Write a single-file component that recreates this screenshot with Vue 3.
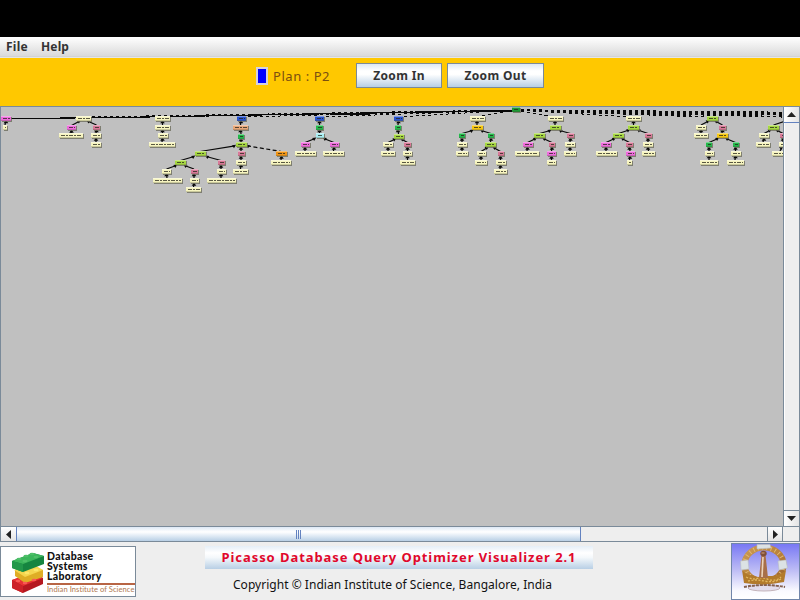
<script setup>
const colors = {
  c: '#f6f4bf', p: '#ee6bdc', r: '#d87998', g: '#23b84b', y: '#a5d642',
  b: '#2853ce', s: '#e9a779', o: '#f09416', t: '#a8edf2', w: '#f5c713'
}

// Each node: x, y, width, colour key, index of its parent within the tree
const trees = [
  [[6, 118, 10, 'p'], [5, 127, 4, 'c', 0]],
  [[83.5, 118, 15, 'c'], [71.5, 127.5, 9, 'p', 0], [71, 135.5, 24, 'c', 1], [96.5, 127, 7, 'r', 0], [96, 135.5, 10, 'c', 3], [96, 144.5, 10, 'c', 4]],
  [[162.5, 118, 15, 'c'], [162.5, 127, 15, 'c', 0], [162.5, 135.5, 10, 'c', 1], [162, 144.5, 26, 'c', 2]],
  [[241, 118, 9, 'b'], [240.5, 127, 15, 's', 0], [241, 136, 6, 'g', 1], [241, 144.5, 11, 'y', 2],
    [241, 153.5, 7, 'r', 3], [241, 162, 10, 'c', 4], [240.5, 171, 15, 'c', 5],
    [200, 153.5, 11, 'y', 3], [180.5, 162.5, 11, 'y', 7], [166.5, 171, 9, 'c', 8], [167, 180.5, 29, 'c', 9],
    [194, 171, 7, 'r', 8], [194, 180.5, 9, 'c', 11], [193.5, 189.5, 15, 'c', 12],
    [221, 162.5, 7, 'r', 7], [221, 171, 9, 'c', 14], [221, 180.5, 29, 'c', 15],
    [281.5, 153.5, 11, 'o', 3, true], [281, 162, 20, 'c', 17]],
  [[319.5, 118, 9, 'b'], [319.5, 127, 7, 'g', 0], [319.5, 135.5, 8, 't', 1], [305, 144.5, 9, 'p', 2], [305, 153, 21, 'c', 3], [334, 144.5, 9, 'p', 2], [333.5, 153, 21, 'c', 5]],
  [[398.5, 118, 9, 'b'], [398, 127, 6, 'g', 0], [398.5, 136, 10, 'y', 1], [388, 144.5, 10, 'c', 2], [388, 153, 14, 'c', 3], [407.5, 144.5, 7, 'r', 2], [407.5, 153, 9, 'c', 5], [407.5, 162, 15, 'c', 6]],
  [[477, 118, 15, 'c'], [477, 127.5, 11, 'w', 0], [462, 135.5, 6, 'g', 1], [462, 144.5, 10, 'c', 2], [462, 153, 12, 'c', 3],
    [491, 135.5, 6, 'g', 1], [490.5, 144.5, 11, 'y', 5], [481, 153.5, 9, 'c', 6], [481, 162, 12, 'c', 7],
    [500.5, 153.5, 6, 'r', 6], [500.5, 162.5, 10, 'c', 9], [500, 171, 13, 'c', 10]],
  [[555, 118, 15, 'c'], [555, 127.5, 11, 'y', 0], [539.5, 135.5, 11, 'y', 1], [527.5, 144.5, 10, 'p', 2], [527, 153, 24, 'c', 3],
    [552, 144.5, 6, 'r', 2], [551.5, 153.5, 9, 'p', 5], [551.5, 162, 9, 'c', 6], [570.5, 135.5, 7, 'r', 1], [570, 144.5, 10, 'c', 8], [570, 153, 12, 'c', 9]],
  [[633.5, 118, 15, 'c'], [633.5, 127, 11, 'y', 0], [618.5, 135.5, 11, 'y', 1], [606, 144.5, 10, 'p', 2], [606, 153, 21, 'c', 3],
    [629.5, 144.5, 7, 'r', 2], [630, 153.5, 9, 'p', 5], [629.5, 162, 5, 'c', 6], [648, 135.5, 7, 'r', 1], [648, 144.5, 10, 'c', 8], [648.5, 153, 13, 'c', 9]],
  [[712, 118, 11, 'y'], [701, 127, 10, 'c', 0], [701, 135.5, 14, 'c', 1], [722.5, 127, 7, 'r', 0], [722, 135.5, 11, 'w', 3],
    [709, 144.5, 6, 'g', 4], [709, 153, 9, 'c', 5], [709, 162, 18, 'c', 6], [735.5, 144.5, 6, 'g', 4], [735.5, 153, 10, 'c', 8], [735, 162, 17, 'c', 9]],
  [[791, 118, 11, 'y'], [773.5, 127, 11, 'y', 0], [764, 135.5, 10, 'c', 1], [763, 144.5, 14, 'c', 2], [783, 135.5, 7, 'r', 1], [783, 144.5, 9, 'c', 4], [780, 153, 17, 'c', 5]]
]

const nodes = []
const edges = []
const addNode = (x, y, w, fill) => nodes.push({ x: Math.round(x - w / 2), y: Math.round(y - 2.5), w: w, fill })
for (const tree of trees) {
  for (const [x, y, w, k, parent, dashed] of tree) {
    addNode(x, y, w, colors[k])
    if (parent === undefined) continue
    const [px, py] = tree[parent]
    const dx = x - px
    const dy = y - py
    const wide = Math.abs(dx) > 30
    const ax = wide ? px + Math.sign(dx) * 6 : px + dx * 0.3
    const ay = wide ? py + dy * 6 / Math.abs(dx) : py + 3
    edges.push({
      x1: ax, y1: ay, x2: x, y2: y - 2, dashed,
      head: Math.abs(dx) < 3
        ? `M${px} ${ay - 1} l2.3 3.2 h-4.6z`
        : dx < 0 ? `M${ax + 1} ${ay - 1} l-4 .4 l2 3z` : `M${ax - 1} ${ay - 1} l4 .4 l-2 3z`
    })
  }
}
addNode(515.5, 109.5, 8, '#1d9a35')
const links = [83, 162, 241, 319, 398, 477, 555, 633, 712, 791, 900, 1040, 1300]
</script>

<template>
  <div class="window">
    <div class="blank"></div>
    <nav class="menu"><span class="file">File</span><span class="help">Help</span></nav>
    <header class="toolbar">
      <i class="swatch"></i><span class="plan">Plan : P2</span>
      <button class="btn zin">Zoom In</button><button class="btn zout">Zoom Out</button>
    </header>
    <main class="pane">
      <svg class="graph" width="782" height="419" viewBox="1 107 782 419">
        <g shape-rendering="crispEdges" stroke="#080808" fill="none">
          <line v-for="x in links" :key="x" x1="515" y1="110" :x2="x" y2="117" stroke-dasharray="3 3" :stroke-width="x > 700 ? 1.5 : 1" />
          <path d="M1 118.5 H38 M38 118.5 H75 M60 117.5 H150 M140 116.5 H205 M195 115.5 H262 M250 114.5 H319 M305 113.5 H374 M360 112.5 H430 M415 111.5 H482 M470 110.5 H512" stroke-width="1" />
          <path d="M330 114.5 H370 M400 112.5 H440 M450 111.5 H512" stroke-width="1" />
        </g>
        <g v-for="(e, i) in edges" :key="'e' + i">
          <line :x1="e.x1" :y1="e.y1" :x2="e.x2" :y2="e.y2" stroke="#080808" stroke-width="1.25" :stroke-dasharray="e.dashed ? '4 2.5' : null" />
          <path :d="e.head" fill="#080808" />
        </g>
        <g v-for="(n, i) in nodes" :key="'n' + i" shape-rendering="crispEdges">
          <rect :x="n.x + 1" :y="n.y + 1" :width="n.w" height="5" fill="#6d6d5c" opacity=".8" />
          <rect :x="n.x" :y="n.y" :width="n.w" height="5" :fill="n.fill" />
          <rect :x="n.x" :y="n.y" :width="n.w" height="1" fill="#fff" opacity=".4" />
          <rect :x="n.x" :y="n.y + 4" :width="n.w" height="1" fill="#444430" opacity=".25" />
          <line :x1="n.x + 2" :x2="n.x + n.w - 1" :y1="n.y + 2.5" :y2="n.y + 2.5" stroke="#25251a" stroke-width="1" stroke-dasharray="4 1 2 1" opacity=".75" />
        </g>
      </svg>
      <div class="vbar">
        <div class="arrow up"><svg width="9" height="5"><path d="M0 5 L4.5 0 L9 5z" /></svg></div>
        <div class="vtrack"></div>
        <div class="arrow down"><svg width="9" height="5"><path d="M0 0 H9 L4.5 5z" /></svg></div>
      </div>
    </main>
    <div class="hbar">
      <div class="harrow left"><svg width="5" height="9"><path d="M5 0 V9 L0 4.5z" /></svg></div>
      <div class="thumb"><i></i><i></i><i></i></div>
      <div class="htrack"></div>
      <div class="harrow right"><svg width="5" height="9"><path d="M0 0 V9 L5 4.5z" /></svg></div>
      <div class="corner"></div>
    </div>
    <footer class="footer">
      <div class="dsl">
        <svg class="bricks" width="34" height="43" viewBox="11 551 34 43">
          <path d="M12 580 L32 573 L43 578 V584 L23 593 L12 588z" fill="#b51820" />
          <path d="M12 580 L32 573 L43 578 L23 586z" fill="#e83134" />
          <path d="M12 580 L23 586 V593 L12 588z" fill="#cd2228" />
          <path d="M15 570 L32 567 L43 570 V577 L25 583 L15 576z" fill="#dfad25" />
          <path d="M14 570 L33 564 L43 570 L25 577z" fill="#f6d54e" />
          <path d="M12 561 L33 553 L44 556 V564 L23 572 L12 568z" fill="#168540" />
          <path d="M12 561 L33 553 L44 556 L23 564z" fill="#3cb65c" />
          <path d="M12 561 L23 564 V572 L12 568z" fill="#23984a" />
          <g fill="#4fc06a"><ellipse cx="19" cy="559" rx="2.5" ry="1.3" /><ellipse cx="26" cy="556" rx="2.5" ry="1.3" /><ellipse cx="32" cy="554" rx="2.5" ry="1.3" /><ellipse cx="36" cy="557" rx="2.5" ry="1.3" /><ellipse cx="25" cy="561" rx="2.5" ry="1.3" /></g>
          <g fill="#fce66a"><ellipse cx="27" cy="573" rx="2.5" ry="1.2" /><ellipse cx="36" cy="570" rx="2.5" ry="1.2" /></g>
          <g fill="#f85a55"><ellipse cx="18" cy="581" rx="2.3" ry="1.2" /><ellipse cx="25" cy="583" rx="2.3" ry="1.2" /><ellipse cx="34" cy="580" rx="2.3" ry="1.2" /></g>
        </svg>
        <div class="words">
          <b>Database</b><b>Systems</b><b class="lab">Laboratory</b>
          <span>Indian Institute of Science</span>
        </div>
      </div>
      <div class="center">
        <div class="title"><span>Picasso Database Query Optimizer Visualizer 2.1</span></div>
        <div class="copy">Copyright © Indian Institute of Science, Bangalore, India</div>
      </div>
      <svg class="seal" width="69" height="57" viewBox="731 543 69 57">
        <defs>
          <linearGradient id="sky" x1="0" y1="0" x2="0" y2="1"><stop offset="0" stop-color="#7777f4" /><stop offset=".45" stop-color="#b9b8f5" /><stop offset=".85" stop-color="#fafaff" /><stop offset="1" stop-color="#fff" /></linearGradient>
          <linearGradient id="gold" x1="0" y1="0" x2="1" y2="1"><stop offset="0" stop-color="#ca9a54" /><stop offset=".6" stop-color="#b67e3a" /><stop offset="1" stop-color="#96602c" /></linearGradient>
        </defs>
        <rect x="731.5" y="543.5" width="68" height="56" fill="url(#sky)" stroke="#7186aa" />
        <ellipse cx="764" cy="588" rx="16" ry="3" fill="#e2dcec" stroke="#c4b4ba" />
        <path d="M744 587 Q764 583 785 587" fill="none" stroke="#84604f" stroke-width="2" stroke-dasharray="3 1" />
        <ellipse cx="764" cy="564.5" rx="19.5" ry="17" fill="none" stroke="url(#gold)" stroke-width="6" />
        <ellipse cx="764" cy="564.5" rx="19.5" ry="17" fill="none" stroke="#e0b870" stroke-width="4.5" stroke-dasharray="1 3.4" />
        <path d="M742 570 Q747 576 752 575 L758 577 L764 576 L772 576 Q781 575 786 570 L784 582 Q764 586 744 583z" fill="#b27a2c" />
        <path d="M746 577 q5 2 9 2 q8 -3 14 1 q8 1 12-3 M748 581 q8-2 16 0 q10 2 17-2" fill="none" stroke="#e2b860" stroke-width="1.3" stroke-dasharray="2 1.5" />
        <path d="M757 544.5 L770 544.5 L771 548 L757 549z M740.5 561 L748 560 L749 569 L741 570z M778 561 L786 560 L787.5 568 L779 570z" fill="#dce2e4" stroke="#b8bdc4" stroke-width=".6" />
        <path d="M761.5 555 H765.5 L768 578 H759z" fill="#a86f48" /><path d="M763 557 L762 577" stroke="#ecd4ba" stroke-width="1.6" />
        <ellipse cx="763.5" cy="553.5" rx="3.2" ry="2.8" fill="#805038" /><path d="M761.5 553h3" stroke="#d5a17b" />
      </svg>
    </footer>
  </div>
</template>

<style>
body { margin: 0; overflow: hidden; }
</style>
<style scoped>
* { box-sizing: border-box; }
.window { width: 800px; height: 600px; background: #eee; font-family: "Noto Sans", "Open Sans", sans-serif; color: #333; display: flex; flex-direction: column; overflow: hidden; }
svg { display: block; }
.blank { height: 37px; background: #000; }
.menu { height: 21px; background: linear-gradient(#fff, #dadada 90%, #ccc 91%, #eee); display: flex; gap: 13px; padding-left: 6px; font-weight: 700; font-size: 12px; line-height: 19px; }
.file { width: 22px; letter-spacing: .25px; }
.help { letter-spacing: .15px; }
.toolbar { height: 48px; background: #ffc800; display: flex; align-items: flex-start; padding: 5px 0 0 256px; }
.swatch { width: 12px; height: 18px; margin-top: 4px; background: #00f; border: 2px solid #d6d2dc; }
.plan { margin-left: 5px; width: 83px; font-size: 13px; line-height: 26px; color: #7a4e10; white-space: nowrap; letter-spacing: .55px; }
.btn { height: 25px; padding: 0; border: 1px solid #7a8a99; background: linear-gradient(#dde8f3, #fff 30%, #fff 45%, #b8cfe5); font: 700 12px/22px "Noto Sans", "Open Sans", sans-serif; color: #333; letter-spacing: .35px; }
.zin { width: 86px; }
.zout { width: 97px; margin-left: 5px; }
.pane { height: 420px; border-top: 1px solid #7a8a99; border-left: 1px solid #7a8a99; background: #c0c0c0; display: flex; }
.graph { width: 782px; height: 419px; flex: none; }
.vbar { width: 17px; height: 419px; background: #eee; border-left: 1px solid #7a8a99; border-right: 1px solid #7a8a99; display: flex; flex-direction: column; }
.arrow { height: 16px; display: flex; align-items: center; justify-content: center; background: linear-gradient(90deg, #fff, #e4e4e4); }
.arrow path, .harrow path { fill: #222; }
.up { border-bottom: 1px solid #6382bf; }
.down { border-top: 1px solid #7a8a99; }
.vtrack { flex: 1; background: #eee; border-left: 1px solid #fff; }
.hbar { height: 16px; display: flex; border: 1px solid #7a8a99; background: #eee; }
.harrow { width: 15px; display: flex; align-items: center; justify-content: center; background: linear-gradient(#fff, #e4e4e4); }
.thumb { width: 565px; border-left: 1px solid #6382bf; border-right: 1px solid #6382bf; background: linear-gradient(#dde8f5, #fff 35%, #e4edf6 60%, #b8cfe5); display: flex; justify-content: center; align-items: center; gap: 1px; }
.thumb i { width: 1px; height: 9px; background: #6382bf; }
.htrack { width: 186px; }
.right { width: 16px; border-left: 1px solid #7a8a99; border-right: 1px solid #7a8a99; }
.corner { flex: 1; }
.footer { height: 58px; display: flex; align-items: flex-start; padding-top: 1px; }
.dsl { width: 136px; height: 51px; margin-top: 3px; background: #fff; border: 1px solid #7a8a99; display: flex; padding: 4px 0 0 10px; overflow: hidden; }
.bricks { flex: none; }
.words { width: 90px; margin-left: 2px; display: flex; flex-direction: column; white-space: nowrap; font-family: Lato, sans-serif; color: #111; }
.words b { font-size: 10.5px; line-height: 10px; font-weight: 900; letter-spacing: .3px; }
.words .lab { height: 12px; }
.words span { border-top: 2px solid #b86545; color: #b0784f; font-size: 7.6px; line-height: 9px; letter-spacing: .05px; }
.center { width: 595px; height: 57px; display: flex; flex-direction: column; align-items: flex-start; }
.title { margin: 3px 0 0 69px; width: 388px; height: 23px; text-align: center; background: linear-gradient(#e5eef7, #fff 30%, #f4f8fb 50%, #b8cfe5); color: #e1072b; font-size: 13px; font-weight: 700; line-height: 22px; letter-spacing: .93px; white-space: nowrap; }
.copy { margin: 4px 0 0 97px; font-size: 12px; line-height: 24px; letter-spacing: .03px; color: #111; white-space: nowrap; }
.seal { flex: none; }
</style>
